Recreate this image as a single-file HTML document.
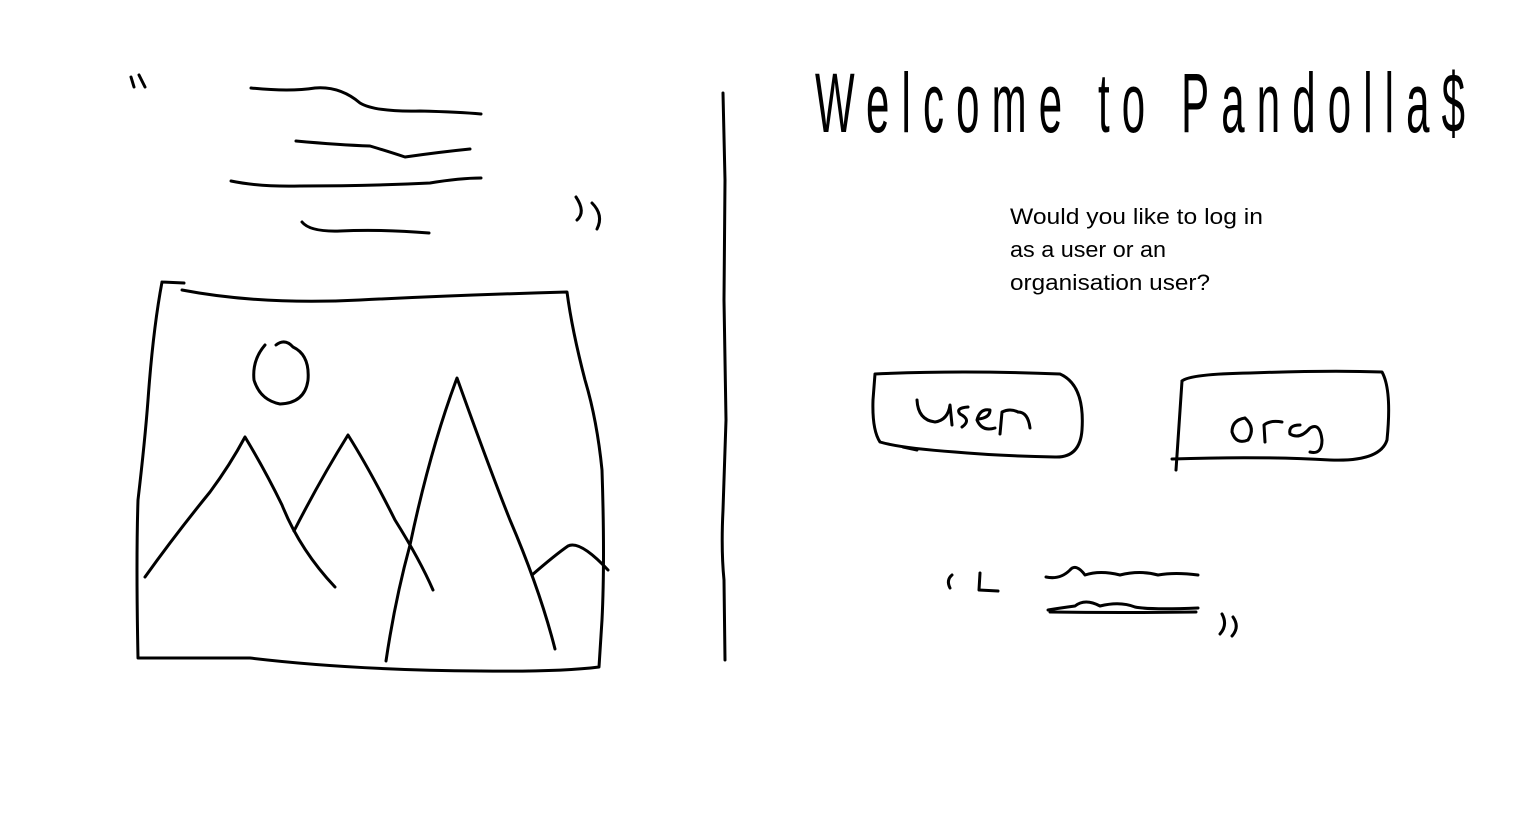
<!DOCTYPE html>
<html><head><meta charset="utf-8"><style>
html,body{margin:0;padding:0;background:#fff;width:1529px;height:834px;overflow:hidden}
svg{display:block}
</style></head><body>
<svg width="1529" height="834" viewBox="0 0 1529 834" xmlns="http://www.w3.org/2000/svg">
<g fill="none" stroke="#000" stroke-width="3" stroke-linecap="round" stroke-linejoin="round">
<path d="M131 77 L134 87 M139 75 L145 87"/>
<path d="M576 197 Q586 212 577 220 M592 203 Q604 215 597 229"/>
<path d="M251 88 Q290 92 315 88 Q340 86 360 103 Q375 112 420 111 Q460 112 481 114"/>
<path d="M296 141 Q340 145 370 146 Q390 152 405 157 Q440 152 470 149"/>
<path d="M231 181 Q260 187 300 186 Q370 186 430 183 Q460 178 481 178"/>
<path d="M302 222 Q310 232 340 231 Q380 229 429 233"/>
<path d="M162 282 L184 283 M182 290 Q260 305 360 300 Q460 295 567 292 Q572 330 585 380 Q597 420 602 470 Q605 560 602 620 L599 667 Q560 672 480 671 Q350 670 250 658 L138 658 Q136 560 138 500 Q145 440 148 400 Q153 330 162 282"/>
<path d="M265 345 Q252 360 254 380 Q260 400 280 404 Q305 403 308 380 Q310 355 293 347 Q285 338 276 345"/>
<path d="M145 577 Q175 535 210 492 Q230 465 245 437 Q265 470 282 505 Q300 550 335 587"/>
<path d="M294 531 Q320 480 348 435 Q370 470 395 520 Q420 560 433 590"/>
<path d="M386 661 Q395 600 410 545 Q430 450 457 378 Q490 470 510 520 Q540 590 555 649"/>
<path d="M532 575 Q555 555 568 546 Q580 540 608 570"/>
<path d="M723 93 L725 180 L724 300 L726 420 L723 510 Q721 550 724 580 L725 660"/>
<path d="M875 374 Q960 370 1060 374 Q1085 385 1082 430 Q1080 458 1055 457 Q1000 456 955 452 Q900 448 880 442 Q872 430 873 400 Z"/>
<path d="M903 447 L917 450"/>
<path d="M1182 381 Q1190 374 1250 373 Q1330 370 1382 372 Q1392 390 1387 440 Q1380 462 1330 460 Q1260 456 1172 459"/>
<path d="M1182 381 L1176 470"/>
<path d="M917 400 Q918 420 935 422 Q948 420 950 405 L952 425"/>
<path d="M968 407 Q955 408 960 414 Q972 420 962 427"/>
<path d="M978 419 Q990 418 990 410 Q980 408 977 420 Q982 432 995 428"/>
<path d="M1000 434 L1002 412 Q1010 408 1018 412"/>
<path d="M1018 412 Q1028 412 1030 428"/>
<path d="M1245 418 Q1232 420 1232 432 Q1236 445 1248 440 Q1256 428 1245 418"/>
<path d="M1265 442 L1264 425 Q1270 420 1282 422"/>
<path d="M1300 425 Q1288 425 1290 434 Q1300 440 1310 428 Q1320 422 1322 440 Q1322 455 1310 452"/>
<path d="M952 575 Q946 580 950 588 M980 573 L979 590 L998 591"/>
<path d="M1046 577 Q1060 580 1070 570 Q1076 563 1085 575 Q1100 570 1120 575 Q1140 570 1158 575 Q1175 572 1198 575"/>
<path d="M1048 610 Q1060 608 1075 606 Q1085 598 1100 606 Q1120 601 1135 607 Q1150 610 1198 608"/>
<path d="M1050 612 Q1120 613 1196 612"/>
<path d="M1222 614 Q1228 625 1220 634 M1233 617 Q1240 627 1232 636"/>
</g>
<text transform="translate(815,132) scale(1,2)" x="0" y="0" font-family="Liberation Sans, sans-serif" font-size="42" fill="#000" textLength="650" lengthAdjust="spacing">Welcome to Pandolla$</text>
<g font-family="Liberation Sans, sans-serif" font-size="22" fill="#000">
<text x="1010" y="224" textLength="253" lengthAdjust="spacingAndGlyphs">Would you like to log in</text>
<text x="1010" y="257" textLength="156" lengthAdjust="spacingAndGlyphs">as a user or an</text>
<text x="1010" y="290" textLength="200" lengthAdjust="spacingAndGlyphs">organisation user?</text>
</g>
</svg>
</body></html>
